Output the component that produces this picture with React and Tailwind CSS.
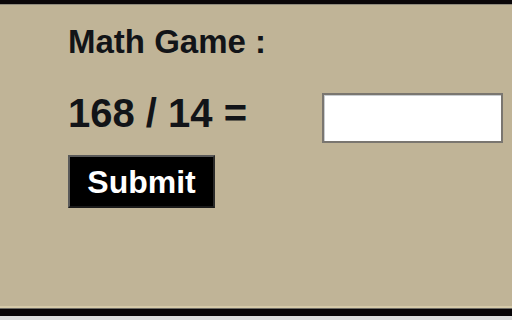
import React, { useState } from "react";

const App = () => {
  const [answer, setAnswer] = useState("");

  return (
    <div className="w-[512px] h-[320px] flex flex-col bg-[#c0b497] overflow-hidden" style={{ fontFamily: '"Liberation Sans", Arial, sans-serif' }}>
      <div className="h-[4px] bg-[#0a0608]" />
      <div className="h-[1px] bg-[#8f8a7c]" />

      <div className="flex-1 pl-[68px]">
        <h1 className="mt-[20px] text-[33px] leading-none font-bold text-[#121418]">Math Game :</h1>

        <div className="mt-[35px] flex items-start">
          <span className="w-[254px] text-[40px] leading-none font-bold text-[#121418]">168 / 14 =</span>
          <input
            type="text"
            value={answer}
            onChange={(e) => setAnswer(e.target.value)}
            className="w-[181px] h-[50px] bg-white border-2 border-[#7a7670] outline-none shadow-[inset_1px_1px_0_#c8ccd0]"
          />
        </div>

        <button className="mt-[12px] w-[147px] h-[53px] bg-black text-white text-[32px] leading-none font-bold border-t-2 border-l-2 border-[#5a5a5a] border-b-2 border-r-2 border-b-[#1a1a1a] border-r-[#2a2a2a] flex items-center justify-center">
          Submit
        </button>
      </div>

      <div className="h-[2px] bg-[#d6caa9]" />
      <div className="h-[1px] bg-[#6c6a64]" />
      <div className="h-[7px] bg-[#080406]" />
      <div className="h-[4px] bg-[#dcdcdc]" />
    </div>
  );
};

export default App;
